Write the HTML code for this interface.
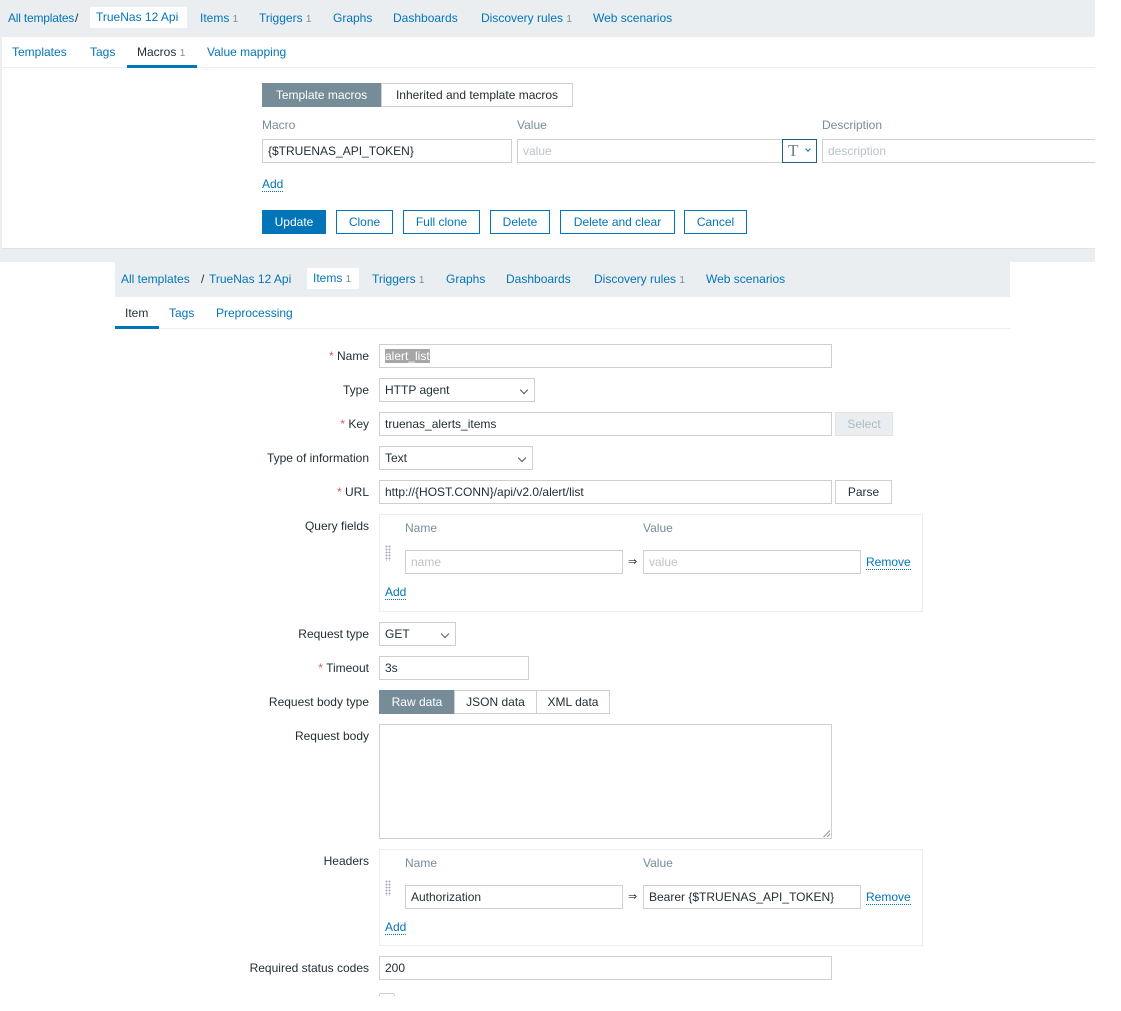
<!DOCTYPE html>
<html><head><meta charset="utf-8"><style>
*{box-sizing:border-box;margin:0;padding:0}
body{width:1121px;height:1011px;background:#fff;font-family:"Liberation Sans",Arial,sans-serif;font-size:12px;color:#1f2c33;position:relative;overflow:hidden}
.a{position:absolute;white-space:nowrap}
.l{color:#0275b8}
.g{color:#768d99}
.n{color:#768d99;font-size:10px}
.box{position:absolute;border:1px solid #cfcfcf;background:#fff;height:24px;line-height:22px;padding-left:5px;white-space:nowrap}
.ph{color:#bbc3c7}
.btn{position:absolute;border:1px solid #0275b8;color:#0275b8;background:#fff;height:24px;line-height:22px;text-align:center}
.lab{position:absolute;right:752px;white-space:nowrap;text-align:right}
.req{color:#e45959}
.chev{position:absolute;right:7px;top:8px;width:6px;height:6px;border-right:1px solid #555;border-bottom:1px solid #555;transform:rotate(45deg)}
.sep{position:absolute;height:1px;background:#ebeef0}
.dots{position:absolute;width:6px;height:16px;background-image:radial-gradient(circle,#aab 0.9px,transparent 1.1px);background-size:3px 3px}
.dl{border-bottom:1px dotted #0275b8}
</style></head><body>
<div class="a" style="left:0;top:0;width:1095px;height:262px;background:#ebeef0"></div>
<div class="a" style="left:2px;top:37px;width:1093px;height:212px;background:#fff;border-bottom:1px solid #dfe4e7;overflow:hidden">
<div class="box ph" style="left:820px;top:102px;width:290px">description</div>
</div>
<div class="a l" style="left:8px;top:11px;letter-spacing:-0.2px">All templates</div>
<div class="a" style="left:75px;top:11px">/</div>
<div class="a l" style="left:90px;top:7px;width:97px;height:21px;background:#fff;line-height:21px;padding-left:6px">TrueNas 12 Api</div>
<div class="a l" style="left:200px;top:11px">Items <span class="n">1</span></div>
<div class="a l" style="left:259px;top:11px">Triggers <span class="n">1</span></div>
<div class="a l" style="left:333px;top:11px">Graphs</div>
<div class="a l" style="left:393px;top:11px">Dashboards</div>
<div class="a l" style="left:481px;top:11px">Discovery rules <span class="n">1</span></div>
<div class="a l" style="left:593px;top:11px">Web scenarios</div>

<div class="a l" style="left:12px;top:45px">Templates</div>
<div class="a l" style="left:90px;top:45px">Tags</div>
<div class="a" style="left:137px;top:45px">Macros <span class="n">1</span></div>
<div class="a l" style="left:207px;top:45px">Value mapping</div>
<div class="sep" style="left:2px;top:67px;width:1093px"></div>
<div class="a" style="left:127px;top:65px;width:70px;height:3px;background:#0275b8"></div>

<div class="a" style="left:262px;top:83px;width:119px;height:24px;background:#768d99;color:#fff;line-height:24px;text-align:center">Template macros</div>
<div class="a" style="left:381px;top:83px;width:192px;height:24px;border:1px solid #cfcfcf;line-height:22px;text-align:center">Inherited and template macros</div>
<div class="a g" style="left:262px;top:118px">Macro</div>
<div class="a g" style="left:517px;top:118px">Value</div>
<div class="a g" style="left:822px;top:118px">Description</div>
<div class="box" style="left:262px;top:139px;width:250px">{$TRUENAS_API_TOKEN}</div>
<div class="box ph" style="left:517px;top:139px;width:266px">value</div>
<div class="a" style="left:782px;top:139px;width:35px;height:24px;border:1px solid #1f5f7f;background:#fff"><span style="position:absolute;left:5px;top:1px;font-family:'Liberation Serif',serif;font-size:17px;color:#6b7c86">T</span><div class="chev" style="right:6px;top:7px;width:4px;height:4px;border-color:#0275b8"></div></div>
<div class="a l dl" style="left:262px;top:177px">Add</div>
<div class="a" style="left:262px;top:210px;width:64px;height:24px;background:#0275b8;color:#fff;line-height:24px;text-align:center">Update</div>
<div class="btn" style="left:336px;top:210px;width:57px">Clone</div>
<div class="btn" style="left:403px;top:210px;width:77px">Full clone</div>
<div class="btn" style="left:490px;top:210px;width:60px">Delete</div>
<div class="btn" style="left:560px;top:210px;width:115px">Delete and clear</div>
<div class="btn" style="left:684px;top:210px;width:63px">Cancel</div>

<div class="a" style="left:115px;top:262px;width:895px;height:35px;background:#ebeef0"></div>
<div class="a l" style="left:121px;top:272px">All templates</div>
<div class="a" style="left:201px;top:272px">/</div>
<div class="a l" style="left:209px;top:272px">TrueNas 12 Api</div>
<div class="a l" style="left:307px;top:268px;width:52px;height:21px;background:#fff;line-height:21px;padding-left:6px">Items <span class="n">1</span></div>
<div class="a l" style="left:372px;top:272px">Triggers <span class="n">1</span></div>
<div class="a l" style="left:446px;top:272px">Graphs</div>
<div class="a l" style="left:506px;top:272px">Dashboards</div>
<div class="a l" style="left:594px;top:272px">Discovery rules <span class="n">1</span></div>
<div class="a l" style="left:706px;top:272px">Web scenarios</div>
<div class="a" style="left:125px;top:306px">Item</div>
<div class="a l" style="left:169px;top:306px">Tags</div>
<div class="a l" style="left:216px;top:306px">Preprocessing</div>
<div class="sep" style="left:115px;top:328px;width:895px"></div>
<div class="a" style="left:115px;top:326px;width:44px;height:3px;background:#0275b8"></div>

<div class="lab" style="top:349px"><span class="req">*</span> Name</div>
<div class="box" style="left:379px;top:344px;width:453px"><span style="background:#a6a6a6;color:#fff">alert_list</span></div>
<div class="lab" style="top:383px">Type</div>
<div class="box" style="left:379px;top:378px;width:156px">HTTP agent<div class="chev"></div></div>
<div class="lab" style="top:417px"><span class="req">*</span> Key</div>
<div class="box" style="left:379px;top:412px;width:453px">truenas_alerts_items</div>
<div class="a" style="left:835px;top:412px;width:58px;height:24px;border:1px solid #dfe4e7;background:#ebeef0;color:#acbbc2;line-height:22px;text-align:center">Select</div>
<div class="lab" style="top:451px">Type of information</div>
<div class="box" style="left:379px;top:446px;width:154px">Text<div class="chev"></div></div>
<div class="lab" style="top:485px"><span class="req">*</span> URL</div>
<div class="box" style="left:379px;top:480px;width:453px">http://{HOST.CONN}/api/v2.0/alert/list</div>
<div class="a" style="left:835px;top:480px;width:57px;height:24px;border:1px solid #cfcfcf;line-height:22px;text-align:center">Parse</div>

<div class="lab" style="top:519px">Query fields</div>
<div class="a" style="left:379px;top:514px;width:544px;height:98px;border:1px solid #ebeef0"></div>
<div class="a g" style="left:405px;top:521px">Name</div>
<div class="a g" style="left:643px;top:521px">Value</div>
<div class="dots" style="left:385px;top:545px"></div>
<div class="box ph" style="left:405px;top:550px;width:218px">name</div>
<div class="a" style="left:628px;top:555px;font-size:11px">⇒</div>
<div class="box ph" style="left:643px;top:550px;width:218px">value</div>
<div class="a l dl" style="left:866px;top:555px">Remove</div>
<div class="a l dl" style="left:385px;top:585px">Add</div>

<div class="lab" style="top:627px">Request type</div>
<div class="box" style="left:379px;top:622px;width:77px">GET<div class="chev"></div></div>
<div class="lab" style="top:661px"><span class="req">*</span> Timeout</div>
<div class="box" style="left:379px;top:656px;width:150px">3s</div>
<div class="lab" style="top:695px">Request body type</div>
<div class="a" style="left:379px;top:690px;width:76px;height:24px;background:#768d99;color:#fff;line-height:24px;text-align:center">Raw data</div>
<div class="a" style="left:454px;top:690px;width:83px;height:24px;border:1px solid #cfcfcf;line-height:22px;text-align:center">JSON data</div>
<div class="a" style="left:536px;top:690px;width:74px;height:24px;border:1px solid #cfcfcf;line-height:22px;text-align:center">XML data</div>
<div class="lab" style="top:729px">Request body</div>
<div class="a" style="left:379px;top:724px;width:453px;height:115px;border:1px solid #cfcfcf"><div style="position:absolute;right:1px;bottom:1px;width:7px;height:7px;background:linear-gradient(135deg,transparent 50%,#999 50%,#999 60%,transparent 60%,transparent 75%,#999 75%,#999 85%,transparent 85%)"></div></div>

<div class="lab" style="top:854px">Headers</div>
<div class="a" style="left:379px;top:849px;width:544px;height:97px;border:1px solid #ebeef0"></div>
<div class="a g" style="left:405px;top:856px">Name</div>
<div class="a g" style="left:643px;top:856px">Value</div>
<div class="dots" style="left:385px;top:880px"></div>
<div class="box" style="left:405px;top:885px;width:218px">Authorization</div>
<div class="a" style="left:628px;top:890px;font-size:11px">⇒</div>
<div class="box" style="left:643px;top:885px;width:218px">Bearer {$TRUENAS_API_TOKEN}</div>
<div class="a l dl" style="left:866px;top:890px">Remove</div>
<div class="a l dl" style="left:385px;top:920px">Add</div>

<div class="lab" style="top:961px">Required status codes</div>
<div class="box" style="left:379px;top:956px;width:453px">200</div>
<div class="a" style="left:379px;top:993px;width:16px;height:3px;border:1px solid #cfcfcf;border-bottom:none;border-radius:2px 2px 0 0"></div>
</body></html>
